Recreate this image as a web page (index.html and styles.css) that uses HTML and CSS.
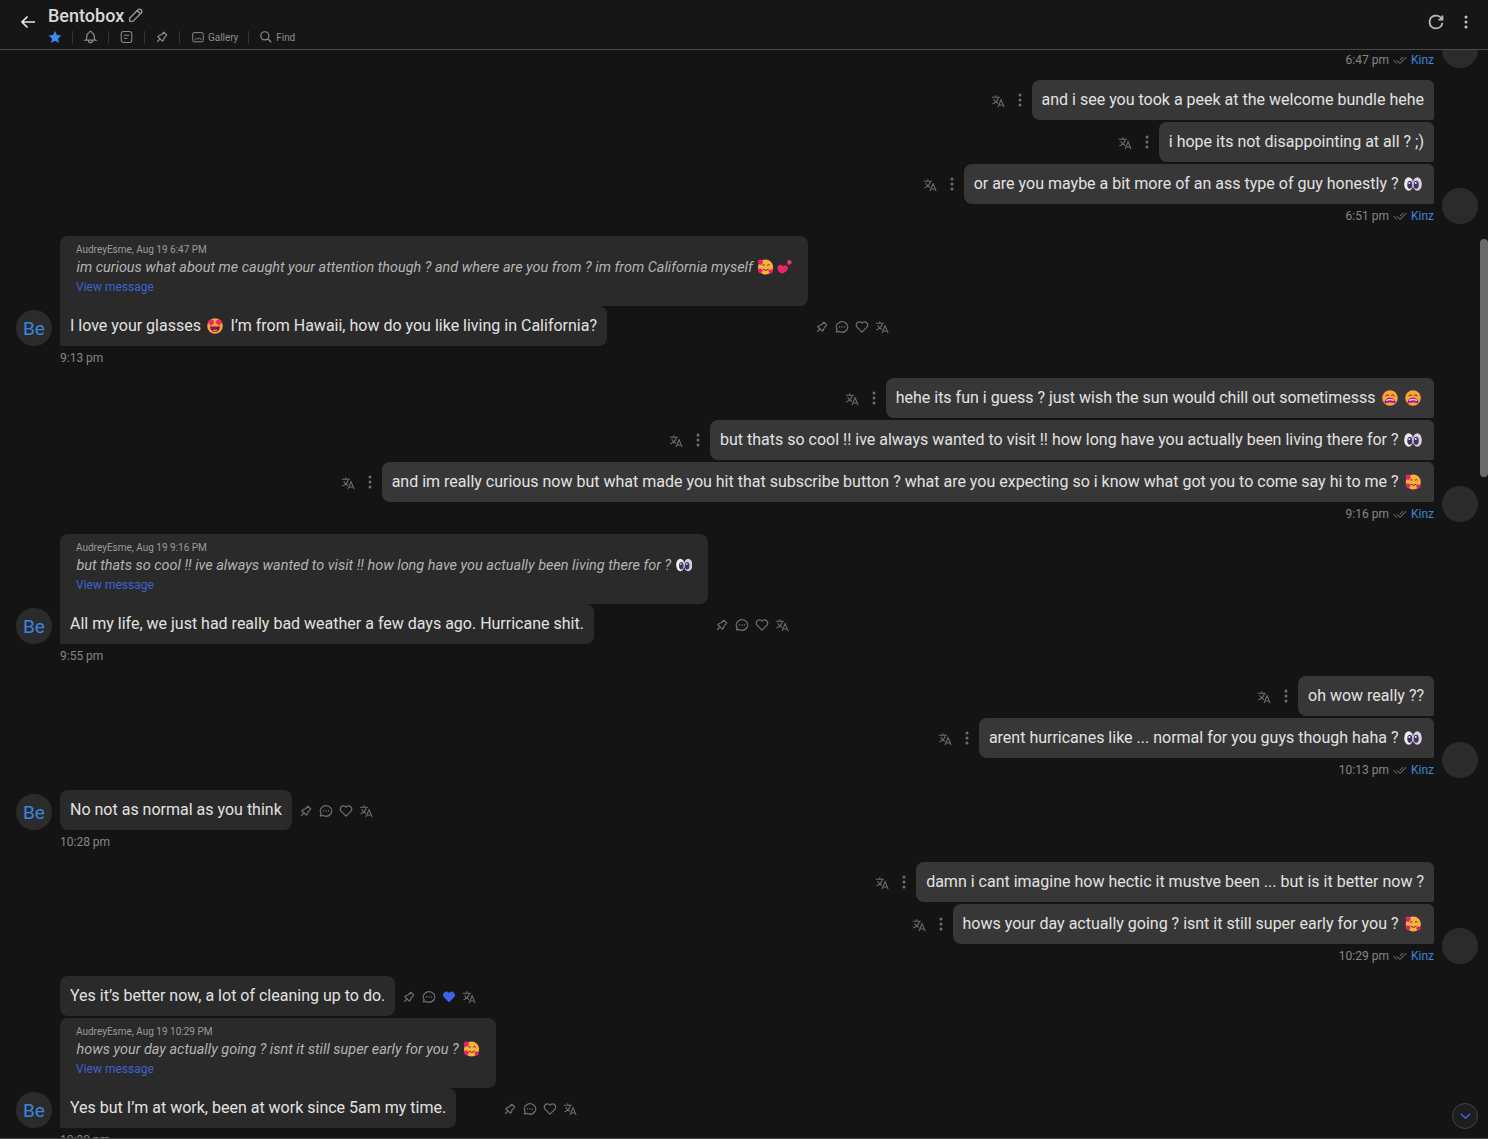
FILE: index.html
```html
<!DOCTYPE html>
<html lang="en">
<head>
    <meta charset="UTF-8">
    <meta name="viewport" content="width=device-width, initial-scale=1.0">
    <title>Bentobox</title>
    <link rel="stylesheet" href="styles.css">
</head>
<body>
    <svg class="defs" width="0" height="0">
        <symbol id="i-translate" viewBox="0 0 16 16">
            <path d="M1 3.800h9M5.500 1.500v2.300M8.500 3.800c-.8 3.500-3 6-7 7.500M3 6c1 2 2.500 3.800 5 4.800M8 15l3.500-8.500L15 15M9.200 12.500h4.600" fill="none" stroke="currentColor" stroke-width="1.200"/>
        </symbol>
        <symbol id="i-dots" viewBox="0 0 4 16">
            <circle cx="2" cy="3" r="1.500" fill="currentColor"/>
            <circle cx="2" cy="8" r="1.500" fill="currentColor"/>
            <circle cx="2" cy="13" r="1.500" fill="currentColor"/>
        </symbol>
        <symbol id="i-pin" viewBox="1 1 22 22">
            <path d="M15 4.500l-4 4-4 1.500-1.500 1.500 7 7 1.500-1.500 1.500-4 4-4M9 15l-4.500 4.500M14.500 4l5.500 5.500" fill="none" stroke="currentColor" stroke-width="2" stroke-linejoin="round"/>
        </symbol>
        <symbol id="i-chat" viewBox="1 1 22 22">
            <path d="M3 20l1.300-3.900c-2.324-3.437-1.426-7.872 2.100-10.374 3.526-2.501 8.590-2.296 11.845.48 3.255 2.777 3.695 7.266 1.029 10.501-2.666 3.235-7.615 4.215-11.574 2.293L3 20" fill="none" stroke="currentColor" stroke-width="2" stroke-linejoin="round"/>
            <circle cx="8" cy="12" r="1.300" fill="currentColor"/>
            <circle cx="12" cy="12" r="1.300" fill="currentColor"/>
            <circle cx="16" cy="12" r="1.300" fill="currentColor"/>
        </symbol>
        <symbol id="i-heart" viewBox="1 1 22 22">
            <path d="M19.500 12.572L12 20l-7.500-7.428a5 5 0 1 1 7.500-6.566 5 5 0 1 1 7.500 6.572" fill="none" stroke="currentColor" stroke-width="2" stroke-linejoin="round"/>
        </symbol>
        <symbol id="i-heart-fill" viewBox="1 1 22 22">
            <path d="M19.500 12.572L12 20l-7.500-7.428a5 5 0 1 1 7.500-6.566 5 5 0 1 1 7.500 6.572" fill="currentColor" stroke="currentColor" stroke-width="1"/>
        </symbol>
        <symbol id="i-checks" viewBox="1 5 22 13">
            <path d="M7 12l5 5L22 7M2 12l5 5M12 12l5-5" fill="none" stroke="currentColor" stroke-width="1.500"/>
        </symbol>
        <symbol id="e-eyes" viewBox="0 0 18 16">
            <ellipse cx="4.700" cy="8" rx="4.500" ry="6.800" fill="#efeaf4"/>
            <ellipse cx="13.300" cy="8" rx="4.500" ry="6.800" fill="#d8d0e2"/>
            <ellipse cx="5.800" cy="8.800" rx="2.500" ry="4" fill="#3f3260"/>
            <ellipse cx="12.200" cy="8.800" rx="2.500" ry="4" fill="#3f3260"/>
            <circle cx="5.400" cy="7" r=".9" fill="#fff"/>
            <circle cx="11.800" cy="7" r=".9" fill="#fff"/>
        </symbol>
        <symbol id="e-hearts-face" viewBox="0 0 16 16">
            <circle cx="8.300" cy="8" r="7.600" fill="#fbb03b"/>
            <path d="M5 6.300q1.300-1.500 2.500 0M10 6.300q1.300-1.500 2.500 0M5.800 10q2.800 3 5.600 0" fill="none" stroke="#5b2a12" stroke-width="1"/>
            <path d="M2.800.5C.8.500 0 2.500.8 4L3 6.300 5.300 4.300C6.500 2.600 4.800.1 2.800.5z" fill="#e6206f"/>
            <path d="M2.500 9.500c-1.500 0-2.400 1.500-1.700 2.800L3 14.800l2.300-2.200C6.300 11.100 4.500 9 2.500 9.500z" fill="#e6206f"/>
            <path d="M13.300 10.500c-1.300-.4-2.600 1-2 2.300l1.700 2.200 2.300-1.700c1-1.300-.5-3.300-2-2.800z" fill="#e6206f"/>
        </symbol>
        <symbol id="e-heart-eyes" viewBox="0 0 16 16">
            <circle cx="8" cy="8" r="7.800" fill="#f9a33a"/>
            <path d="M3 8.500h10c0 3.500-2.300 5.500-5 5.500s-5-2-5-5.500z" fill="#7a1f4a"/>
            <path d="M5 12.300q3-1.500 6 0-3 2.300-6 0z" fill="#f06a8a"/>
            <path d="M4 1.800C1.800 1.400.5 3.400 1.300 5L4 7.800 6.800 5.500C8 3.700 6 1.300 4 1.800zM12 1.800c-2-.5-4 1.900-2.800 3.700L12 7.800 14.700 5c.8-1.600-.5-3.600-2.700-3.200z" fill="#ef2a6a"/>
        </symbol>
        <symbol id="e-weary" viewBox="0 0 16 16">
            <circle cx="8" cy="8" r="7.800" fill="#f9a33a"/>
            <path d="M3.500 6q1.800-2 3.500-.5M9 5.500q1.700-1.500 3.500.5" fill="none" stroke="#6b2c14" stroke-width="1"/>
            <path d="M2.300 13.800C2.500 9.800 4.800 7.800 8 7.800s5.500 2 5.700 6c-2-1-3.700-1.200-5.700-1.200s-3.700.2-5.700 1.200z" fill="#9c1a8a"/>
            <path d="M4 9.800q4-1.800 8 0v1.200q-4-1.300-8 0z" fill="#f7d9e0"/>
        </symbol>
        <symbol id="e-two-hearts" viewBox="0 0 16 16">
            <path d="M3.800 5.500C1.500 5.500 0 7.800.6 10c.6 2.400 2.400 4.300 4.400 5 2.800-.5 5.500-2.300 6.400-4.500 1-2.500-.8-4.700-3.100-4.400L6.500 7.300C6 6.300 5 5.500 3.800 5.500z" fill="#e8246e"/>
            <path d="M13 .5c-1.400 0-2.400 1.200-2 2.700L11.800 6l3-1.500C16.600 3 15 .3 13 .5z" fill="#f0386f"/>
        </symbol>
    </svg>

    <div class="header">
        <svg class="back" viewBox="0 0 16 16"><path d="M15 8H2M7.500 2.500L2 8l5.500 5.500" fill="none" stroke="currentColor" stroke-width="1.700"/></svg>
        <div class="header-main">
            <div class="title-row">
                <span class="title">Bentobox</span>
                <svg class="pencil" viewBox="2 2 20 20"><path d="M4 20h4L18.500 9.500a2.828 2.828 0 1 0-4-4L4 16v4M13.500 6.500l4 4" fill="none" stroke="currentColor" stroke-width="1.700"/></svg>
            </div>
            <div class="tool-row">
                <svg class="tool tool-star" viewBox="0 0 16 16"><path d="M8 1l2.200 4.700 5.100.6-3.800 3.500 1 5.100L8 12.400 3.500 14.900l1-5.100L.7 6.300l5.100-.6z" fill="currentColor"/></svg>
                <span class="sep"></span>
                <svg class="tool tool-m" viewBox="1 1 22 22"><path d="M10 5a2 2 0 1 1 4 0 7 7 0 0 1 4 6v3a4 4 0 0 0 2 3H4a4 4 0 0 0 2-3v-3a7 7 0 0 1 4-6M9 17v1a3 3 0 0 0 6 0v-1" fill="none" stroke="currentColor" stroke-width="2"/></svg>
                <span class="sep"></span>
                <svg class="tool tool-m" viewBox="0 0 16 16"><rect x="2" y="1.800" width="12" height="12.400" rx="2.500" fill="none" stroke="currentColor" stroke-width="1.200"/><path d="M5 6h6M5 9.500h4" stroke="currentColor" stroke-width="1.200"/></svg>
                <span class="sep"></span>
                <svg class="tool"><use href="#i-pin"/></svg>
                <span class="sep"></span>
                <span class="tool-link">
                    <svg class="tool tool-w" viewBox="0 0 16 16"><rect x="2" y="3" width="12" height="10.500" rx="1.500" fill="none" stroke="currentColor" stroke-width="1.100"/><path d="M4 11.500l2.500-2 1.500 1 2-1.500 2 2.500" fill="none" stroke="currentColor"/><path d="M10.500 6h.01" stroke="currentColor" stroke-width="1.200"/></svg>
                    Gallery
                </span>
                <span class="sep"></span>
                <span class="tool-link">
                    <svg class="tool" viewBox="0 0 24 24"><path d="M10 10m-7 0a7 7 0 1 0 14 0 7 7 0 1 0-14 0M21 21l-6-6" fill="none" stroke="currentColor" stroke-width="2"/></svg>
                    Find
                </span>
            </div>
        </div>
        <div class="header-right">
            <svg class="reload" viewBox="2 2 20 20"><path d="M19.933 13.041a8 8 0 1 1-9.925-8.788c3.899-1 7.935 1.007 9.425 4.747M20 4v5h-5" fill="none" stroke="currentColor" stroke-width="2.400"/></svg>
            <svg class="more"><use href="#i-dots"/></svg>
        </div>
    </div>

    <div class="thread">
        <div class="group out first">
            <div class="stack">
                <div class="meta"><span>6:47 pm</span><svg class="checks"><use href="#i-checks"/></svg><span class="who">Kinz</span></div>
            </div>
            <div class="avatar"></div>
        </div>

        <div class="group out">
            <div class="stack">
                <div class="row"><svg class="ic"><use href="#i-translate"/></svg><svg class="dots"><use href="#i-dots"/></svg><div class="bubble">and i see you took a peek at the welcome bundle hehe</div></div>
                <div class="row"><svg class="ic"><use href="#i-translate"/></svg><svg class="dots"><use href="#i-dots"/></svg><div class="bubble">i hope its not disappointing at all ? ;)</div></div>
                <div class="row"><svg class="ic"><use href="#i-translate"/></svg><svg class="dots"><use href="#i-dots"/></svg><div class="bubble">or are you maybe a bit more of an ass type of guy honestly ? <svg class="emoji"><use href="#e-eyes"/></svg></div></div>
                <div class="meta"><span>6:51 pm</span><svg class="checks"><use href="#i-checks"/></svg><span class="who">Kinz</span></div>
            </div>
            <div class="avatar"></div>
        </div>

        <div class="group in">
            <div class="avatar">Be</div>
            <div class="stack">
                <div class="row">
                    <div class="msg">
                        <div class="quote">
                            <div class="quote-head">AudreyEsme, Aug 19 6:47 PM</div>
                            <div class="quote-text">im curious what about me caught your attention though ? and where are you from ? im from California myself <svg class="emoji"><use href="#e-hearts-face"/></svg> <svg class="emoji"><use href="#e-two-hearts"/></svg></div>
                            <a class="quote-link">View message</a>
                        </div>
                        <div class="bubble">I love your glasses <svg class="emoji"><use href="#e-heart-eyes"/></svg> I’m from Hawaii, how do you like living in California?</div>
                    </div>
                    <div class="actions"><svg class="ic"><use href="#i-pin"/></svg><svg class="ic"><use href="#i-chat"/></svg><svg class="ic"><use href="#i-heart"/></svg><svg class="ic"><use href="#i-translate"/></svg></div>
                </div>
                <div class="meta"><span>9:13 pm</span></div>
            </div>
        </div>

        <div class="group out">
            <div class="stack">
                <div class="row"><svg class="ic"><use href="#i-translate"/></svg><svg class="dots"><use href="#i-dots"/></svg><div class="bubble">hehe its fun i guess ? just wish the sun would chill out sometimesss <svg class="emoji"><use href="#e-weary"/></svg><svg class="emoji"><use href="#e-weary"/></svg></div></div>
                <div class="row"><svg class="ic"><use href="#i-translate"/></svg><svg class="dots"><use href="#i-dots"/></svg><div class="bubble">but thats so cool !! ive always wanted to visit !! how long have you actually been living there for ? <svg class="emoji"><use href="#e-eyes"/></svg></div></div>
                <div class="row"><svg class="ic"><use href="#i-translate"/></svg><svg class="dots"><use href="#i-dots"/></svg><div class="bubble">and im really curious now but what made you hit that subscribe button ? what are you expecting so i know what got you to come say hi to me ? <svg class="emoji"><use href="#e-hearts-face"/></svg></div></div>
                <div class="meta"><span>9:16 pm</span><svg class="checks"><use href="#i-checks"/></svg><span class="who">Kinz</span></div>
            </div>
            <div class="avatar"></div>
        </div>

        <div class="group in">
            <div class="avatar">Be</div>
            <div class="stack">
                <div class="row">
                    <div class="msg">
                        <div class="quote">
                            <div class="quote-head">AudreyEsme, Aug 19 9:16 PM</div>
                            <div class="quote-text">but thats so cool !! ive always wanted to visit !! how long have you actually been living there for ? <svg class="emoji"><use href="#e-eyes"/></svg></div>
                            <a class="quote-link">View message</a>
                        </div>
                        <div class="bubble">All my life, we just had really bad weather a few days ago. Hurricane shit.</div>
                    </div>
                    <div class="actions"><svg class="ic"><use href="#i-pin"/></svg><svg class="ic"><use href="#i-chat"/></svg><svg class="ic"><use href="#i-heart"/></svg><svg class="ic"><use href="#i-translate"/></svg></div>
                </div>
                <div class="meta"><span>9:55 pm</span></div>
            </div>
        </div>

        <div class="group out">
            <div class="stack">
                <div class="row"><svg class="ic"><use href="#i-translate"/></svg><svg class="dots"><use href="#i-dots"/></svg><div class="bubble">oh wow really ??</div></div>
                <div class="row"><svg class="ic"><use href="#i-translate"/></svg><svg class="dots"><use href="#i-dots"/></svg><div class="bubble">arent hurricanes like ... normal for you guys though haha ? <svg class="emoji"><use href="#e-eyes"/></svg></div></div>
                <div class="meta"><span>10:13 pm</span><svg class="checks"><use href="#i-checks"/></svg><span class="who">Kinz</span></div>
            </div>
            <div class="avatar"></div>
        </div>

        <div class="group in">
            <div class="avatar">Be</div>
            <div class="stack">
                <div class="row">
                    <div class="msg"><div class="bubble">No not as normal as you think</div></div>
                    <div class="actions"><svg class="ic"><use href="#i-pin"/></svg><svg class="ic"><use href="#i-chat"/></svg><svg class="ic"><use href="#i-heart"/></svg><svg class="ic"><use href="#i-translate"/></svg></div>
                </div>
                <div class="meta"><span>10:28 pm</span></div>
            </div>
        </div>

        <div class="group out">
            <div class="stack">
                <div class="row"><svg class="ic"><use href="#i-translate"/></svg><svg class="dots"><use href="#i-dots"/></svg><div class="bubble">damn i cant imagine how hectic it mustve been ... but is it better now ?</div></div>
                <div class="row"><svg class="ic"><use href="#i-translate"/></svg><svg class="dots"><use href="#i-dots"/></svg><div class="bubble">hows your day actually going ? isnt it still super early for you ? <svg class="emoji"><use href="#e-hearts-face"/></svg></div></div>
                <div class="meta"><span>10:29 pm</span><svg class="checks"><use href="#i-checks"/></svg><span class="who">Kinz</span></div>
            </div>
            <div class="avatar"></div>
        </div>

        <div class="group in">
            <div class="avatar">Be</div>
            <div class="stack">
                <div class="row">
                    <div class="msg"><div class="bubble">Yes it’s better now, a lot of cleaning up to do.</div></div>
                    <div class="actions"><svg class="ic"><use href="#i-pin"/></svg><svg class="ic"><use href="#i-chat"/></svg><svg class="ic liked"><use href="#i-heart-fill"/></svg><svg class="ic"><use href="#i-translate"/></svg></div>
                </div>
                <div class="row">
                    <div class="msg">
                        <div class="quote">
                            <div class="quote-head">AudreyEsme, Aug 19 10:29 PM</div>
                            <div class="quote-text">hows your day actually going ? isnt it still super early for you ? <svg class="emoji"><use href="#e-hearts-face"/></svg></div>
                            <a class="quote-link">View message</a>
                        </div>
                        <div class="bubble">Yes but I’m at work, been at work since 5am my time.</div>
                    </div>
                    <div class="actions"><svg class="ic"><use href="#i-pin"/></svg><svg class="ic"><use href="#i-chat"/></svg><svg class="ic"><use href="#i-heart"/></svg><svg class="ic"><use href="#i-translate"/></svg></div>
                </div>
                <div class="meta"><span>10:30 pm</span></div>
            </div>
        </div>
    </div>

    <div class="scroll-thumb"></div>
    <div class="scroll-down">
        <svg viewBox="0 0 12 8"><path d="M1 1.500l5 5 5-5" fill="none" stroke="currentColor" stroke-width="1.600"/></svg>
    </div>
</body>
</html>
```

FILE: styles.css
```css
* {box-sizing: border-box;}

html, body {
    height: 100%;
}

body {
    margin: 0;
    overflow: hidden;
    background-color: #141414;
    color: #e2e2e2;
    font-family: Roboto, "Liberation Sans", sans-serif;
    font-size: 16px;
    display: flex;
    flex-direction: column;
}

.defs {
    position: absolute;
}

/* header */
.header {
    flex: none;
    height: 50px;
    display: flex;
    background-color: #161616;
    border-bottom: 1px solid #4a4a4a;
    position: relative;
    z-index: 2;
}

.back {
    width: 18px;
    height: 16px;
    margin: 14px 11px 0 19px;
    color: #e8e8e8;
}

.header-main {
    flex: 1;
}

.title-row {
    height: 30px;
    display: flex;
    align-items: center;
}

.title {
    font-size: 18px;
    font-weight: 500;
    color: #d8d8d8;
}

.pencil {
    width: 16px;
    height: 16px;
    margin-left: 4px;
    color: #999;
}

.tool-row {
    display: flex;
    align-items: center;
    height: 14px;
    color: #8c8c8c;
    font-size: 10px;
}

.tool {
    width: 14px;
    height: 14px;
    flex: none;
}

.tool-m {
    width: 15px;
}

.tool-w {
    width: 16px;
}

.tool-star {
    color: #3b8bf0;
}

.sep {
    width: 1px;
    height: 13px;
    background-color: #333;
    margin: 0 10px;
}

.tool-link {
    display: flex;
    align-items: center;
    gap: 2px;
    letter-spacing: -.05px;
}

.tool-row .tool-link:last-child {
    gap: 3px;
}

.header-right {
    display: flex;
    align-items: flex-start;
    padding-top: 14px;
    color: #c4c4c4;
}

.reload {
    width: 16px;
    height: 16px;
    margin-right: 20px;
    color: #b8b8b8;
}

.more {
    width: 4px;
    height: 16px;
    margin-right: 20px;
}

/* messages */
.thread {
    flex: 1;
    min-height: 0;
    overflow: hidden;
    padding: 0 10px 0 16px;
    border-bottom: 1px solid #444;
}

.group {
    display: flex;
    align-items: flex-end;
    gap: 8px;
    margin-bottom: 12px;
}

.group.first {
    margin-top: -18px;
}

.group.in .avatar {
    margin-bottom: 20px;
}

.stack {
    flex: 1;
    display: flex;
    flex-direction: column;
    gap: 2px;
    min-width: 0;
}

.row {
    display: flex;
    align-items: flex-end;
}

.out .row {
    justify-content: flex-end;
}

.avatar {
    flex: none;
    width: 36px;
    height: 36px;
    border-radius: 50%;
    background-color: #2b2b2b;
    color: #3a86e0;
    font-size: 19px;
    text-align: center;
    line-height: 38px;
}

.bubble {
    width: fit-content;
    height: 40px;
    padding: 10px;
    line-height: 20px;
    white-space: nowrap;
    background-color: #373737;
    border-radius: 8px 6px 2px 8px;
}

.in .bubble {
    background-color: #2a2a2a;
    border-radius: 0 8px 8px 2px;
}

.msg > .bubble:first-child {
    border-radius: 8px;
}

.emoji {
    width: 18px;
    height: 16px;
    vertical-align: -3px;
    margin: 0 2px 0 1.500px;
}

.emoji + .emoji {
    margin-left: 3px;
}

.quote-text .emoji {
    width: 16.500px;
    margin: 0 0 0 1px;
}

.quote-text .emoji + .emoji {
    width: 15px;
    margin: 0;
}

.out .ic {
    margin-right: 5px;
}

.ic {
    width: 14px;
    height: 14px;
    margin-bottom: 12px;
    color: #6e6e6e;
    flex: none;
}

.dots {
    width: 4px;
    height: 16px;
    color: #6e6e6e;
    margin: 0 10px 12px 8px;
    flex: none;
}

.actions {
    display: flex;
    gap: 6px;
    margin-left: 7px;
}

.liked {
    color: #3f63e8;
}

.quote {
    width: fit-content;
    height: 70px;
    padding: 7px 16px 0;
    background-color: #2a2a2a;
    border-radius: 8px 8px 8px 0;
    white-space: nowrap;
}

.quote-head {
    font-size: 10px;
    line-height: 13px;
    color: #9a9a9a;
}

.quote-text {
    font-size: 14.430px;
    line-height: 20px;
    margin-top: 2px;
    padding-left: .5px;
    font-style: italic;
    color: #b4b4b4;
}

.quote-link {
    display: block;
    font-size: 12px;
    line-height: 16px;
    margin-top: 1px;
    color: #3d62d0;
}

.meta {
    height: 20px;
    margin-top: -2px;
    display: flex;
    align-items: flex-end;
    gap: 4px;
    font-size: 12px;
    line-height: 16px;
    color: #868686;
}

.out .meta {
    justify-content: flex-end;
}

.who {
    color: #3d85d8;
}

.checks {
    width: 14px;
    height: 10px;
    margin-bottom: 3px;
    color: #8a8a8a;
}

/* overlays */
.scroll-thumb {
    position: absolute;
    top: 239px;
    right: 0;
    width: 8px;
    height: 238px;
    border-radius: 4px;
    background-color: #6b6b6b;
}

.scroll-down {
    position: absolute;
    left: 1452px;
    top: 1103px;
    width: 26px;
    height: 26px;
    border-radius: 50%;
    border: 1px solid #444;
    background-color: #1e1e1e;
    color: #3f63e8;
    display: flex;
    align-items: center;
    justify-content: center;
}

.scroll-down svg {
    width: 11px;
    height: 8px;
}
```
